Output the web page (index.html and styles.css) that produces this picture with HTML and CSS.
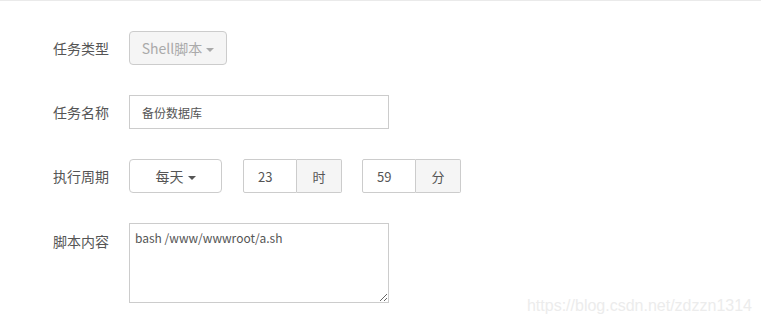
FILE: index.html
```html
<!DOCTYPE html>
<html lang="zh-CN">

<head>
    <meta charset="utf-8">
    <title>添加计划任务</title>
    <link rel="stylesheet" href="styles.css">
</head>

<body>

    <form class="crontab">
        <div class="rad">
            <label class="navn">任务类型</label>
            <button type="button" class="vaelg laast">Shell脚本 <span class="pil"></span></button>
        </div>

        <div class="rad">
            <label class="navn">任务名称</label>
            <input class="felt bred" type="text" value="备份数据库">
        </div>

        <div class="rad">
            <label class="navn">执行周期</label>
            <button type="button" class="vaelg periode">每天 <span class="pil"></span></button>
            <div class="gruppe">
                <input class="felt tal" type="text" value="23">
                <span class="enhed">时</span>
            </div>
            <div class="gruppe">
                <input class="felt tal" type="text" value="59">
                <span class="enhed">分</span>
            </div>
        </div>

        <div class="rad top">
            <label class="navn">脚本内容</label>
            <textarea class="felt script">bash /www/wwwroot/a.sh</textarea>
        </div>
    </form>

    <div class="vandmaerke">https://blog.csdn.net/zdzzn1314</div>

</body>

</html>
```

FILE: styles.css
```css
body {
    margin: 0;
    padding: 0;
    background-color: white;
    font-family: "Noto Sans CJK SC", "Liberation Sans", sans-serif;
    color: #555;
    height: 324px;
    position: relative;
    overflow: hidden;
    border-top: 1px solid #eaeaea;
    box-sizing: border-box;
}

.crontab {
    padding-top: 30px;
    display: flex;
    flex-direction: column;
    gap: 30px;
}

.rad {
    display: flex;
    align-items: center;
    height: 34px;
}

.rad.top {
    align-items: flex-start;
    height: auto;
}

.navn {
    width: 109px;
    margin-right: 20px;
    text-align: right;
    font-size: 14px;
    color: #555;
}

.rad.top .navn {
    padding-top: 8px;
}

.vaelg {
    height: 34px;
    box-sizing: border-box;
    border: 1px solid #ccc;
    border-radius: 4px;
    background-color: white;
    font-family: inherit;
    font-size: 14px;
    color: #555;
    padding: 0;
}

.laast {
    width: 98px;
    background-color: #f5f5f5;
    color: #aaa;
}

.periode {
    width: 93px;
}

.pil {
    display: inline-block;
    width: 0;
    height: 0;
    border-left: 4px solid transparent;
    border-right: 4px solid transparent;
    border-top: 4px solid currentColor;
    vertical-align: middle;
    margin-left: 1px;
}

.felt {
    box-sizing: border-box;
    border: 1px solid #ccc;
    font-family: inherit;
    font-size: 12px;
    color: #555;
    outline: none;
}

.bred {
    width: 260px;
    height: 34px;
    padding: 0 12px;
}

.gruppe {
    display: flex;
    margin-left: 21px;
    height: 34px;
}

.gruppe + .gruppe {
    margin-left: 20px;
}

.tal {
    width: 54px;
    height: 34px;
    padding: 0 0 0 14px;
    font-size: 13px;
    border-radius: 2px 0 0 2px;
}

.enhed {
    width: 45px;
    box-sizing: border-box;
    display: flex;
    align-items: center;
    justify-content: center;
    border: 1px solid #ccc;
    border-left: 0;
    border-radius: 0 2px 2px 0;
    background-color: #f5f5f5;
    font-size: 13px;
}

.script {
    width: 260px;
    height: 80px;
    padding: 5px;
    resize: vertical;
    font-size: 12px;
    line-height: 18px;
}

.vandmaerke {
    position: absolute;
    right: 9px;
    bottom: 9px;
    font-family: "Liberation Sans", sans-serif;
    font-size: 16px;
    color: #ececec;
}
```
